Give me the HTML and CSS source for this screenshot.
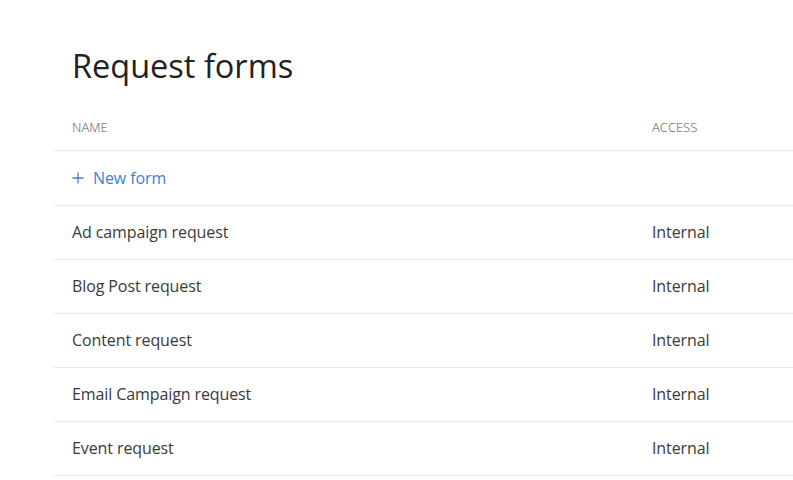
FILE: index.html
```html
<!DOCTYPE html>
<html>
<head>
<meta charset="utf-8">
<link rel="stylesheet" href="styles.css">
</head>
<body>
<main class="page">
  <h1 class="title">Request forms</h1>
  <div class="table">
    <div class="row head">
      <div class="col-name">NAME</div>
      <div class="col-access">ACCESS</div>
    </div>
    <div class="row new">
      <div class="col-name new-link">
        <svg class="plus" width="12" height="12" viewBox="0 0 12 12"><path d="M6 0.5V11.5M0.5 6H11.5" stroke="currentColor" stroke-width="1.3" fill="none"/></svg>
        <span>New form</span>
      </div>
    </div>
    <div class="row item"><div class="col-name">Ad campaign request</div><div class="col-access">Internal</div></div>
    <div class="row item"><div class="col-name">Blog Post request</div><div class="col-access">Internal</div></div>
    <div class="row item"><div class="col-name">Content request</div><div class="col-access">Internal</div></div>
    <div class="row item"><div class="col-name">Email Campaign request</div><div class="col-access">Internal</div></div>
    <div class="row item"><div class="col-name">Event request</div><div class="col-access">Internal</div></div>
  </div>
</main>
</body>
</html>
```
FILE: styles.css
```css
html, body {
  margin: 0;
  padding: 0;
  background: #ffffff;
}
body {
  font-family: "Open Sans", "Noto Sans", sans-serif;
  color: #333333;
}
.page {
  padding-left: 54px;
}
.title {
  margin: 44px 0 16px 18px;
  font-size: 32.5px;
  line-height: 44px;
  font-weight: 450;
  color: #222222;
}
.table {
  display: flex;
  flex-direction: column;
}
.row {
  display: flex;
  align-items: center;
  border-bottom: 1px solid #e8e8e8;
  padding-left: 18px;
  box-sizing: border-box;
  height: 54px;
  padding-bottom: 2px;
}
.row.head {
  height: 47px;
  padding-bottom: 0;
  font-size: 13px;
  font-weight: 300;
  color: #555555;
}
.row.new {
  height: 55px;
  padding-bottom: 0;
}
.col-name {
  width: 580px;
  display: flex;
  align-items: center;
}
.col-access {
  flex: 1;
}
.item {
  font-size: 16px;
  letter-spacing: -0.1px;
  color: #3a3a3a;
}
.new-link {
  color: #3f7fd6;
  font-size: 16px;
  letter-spacing: -0.1px;
  gap: 9px;
}
.plus {
  display: block;
}
```
